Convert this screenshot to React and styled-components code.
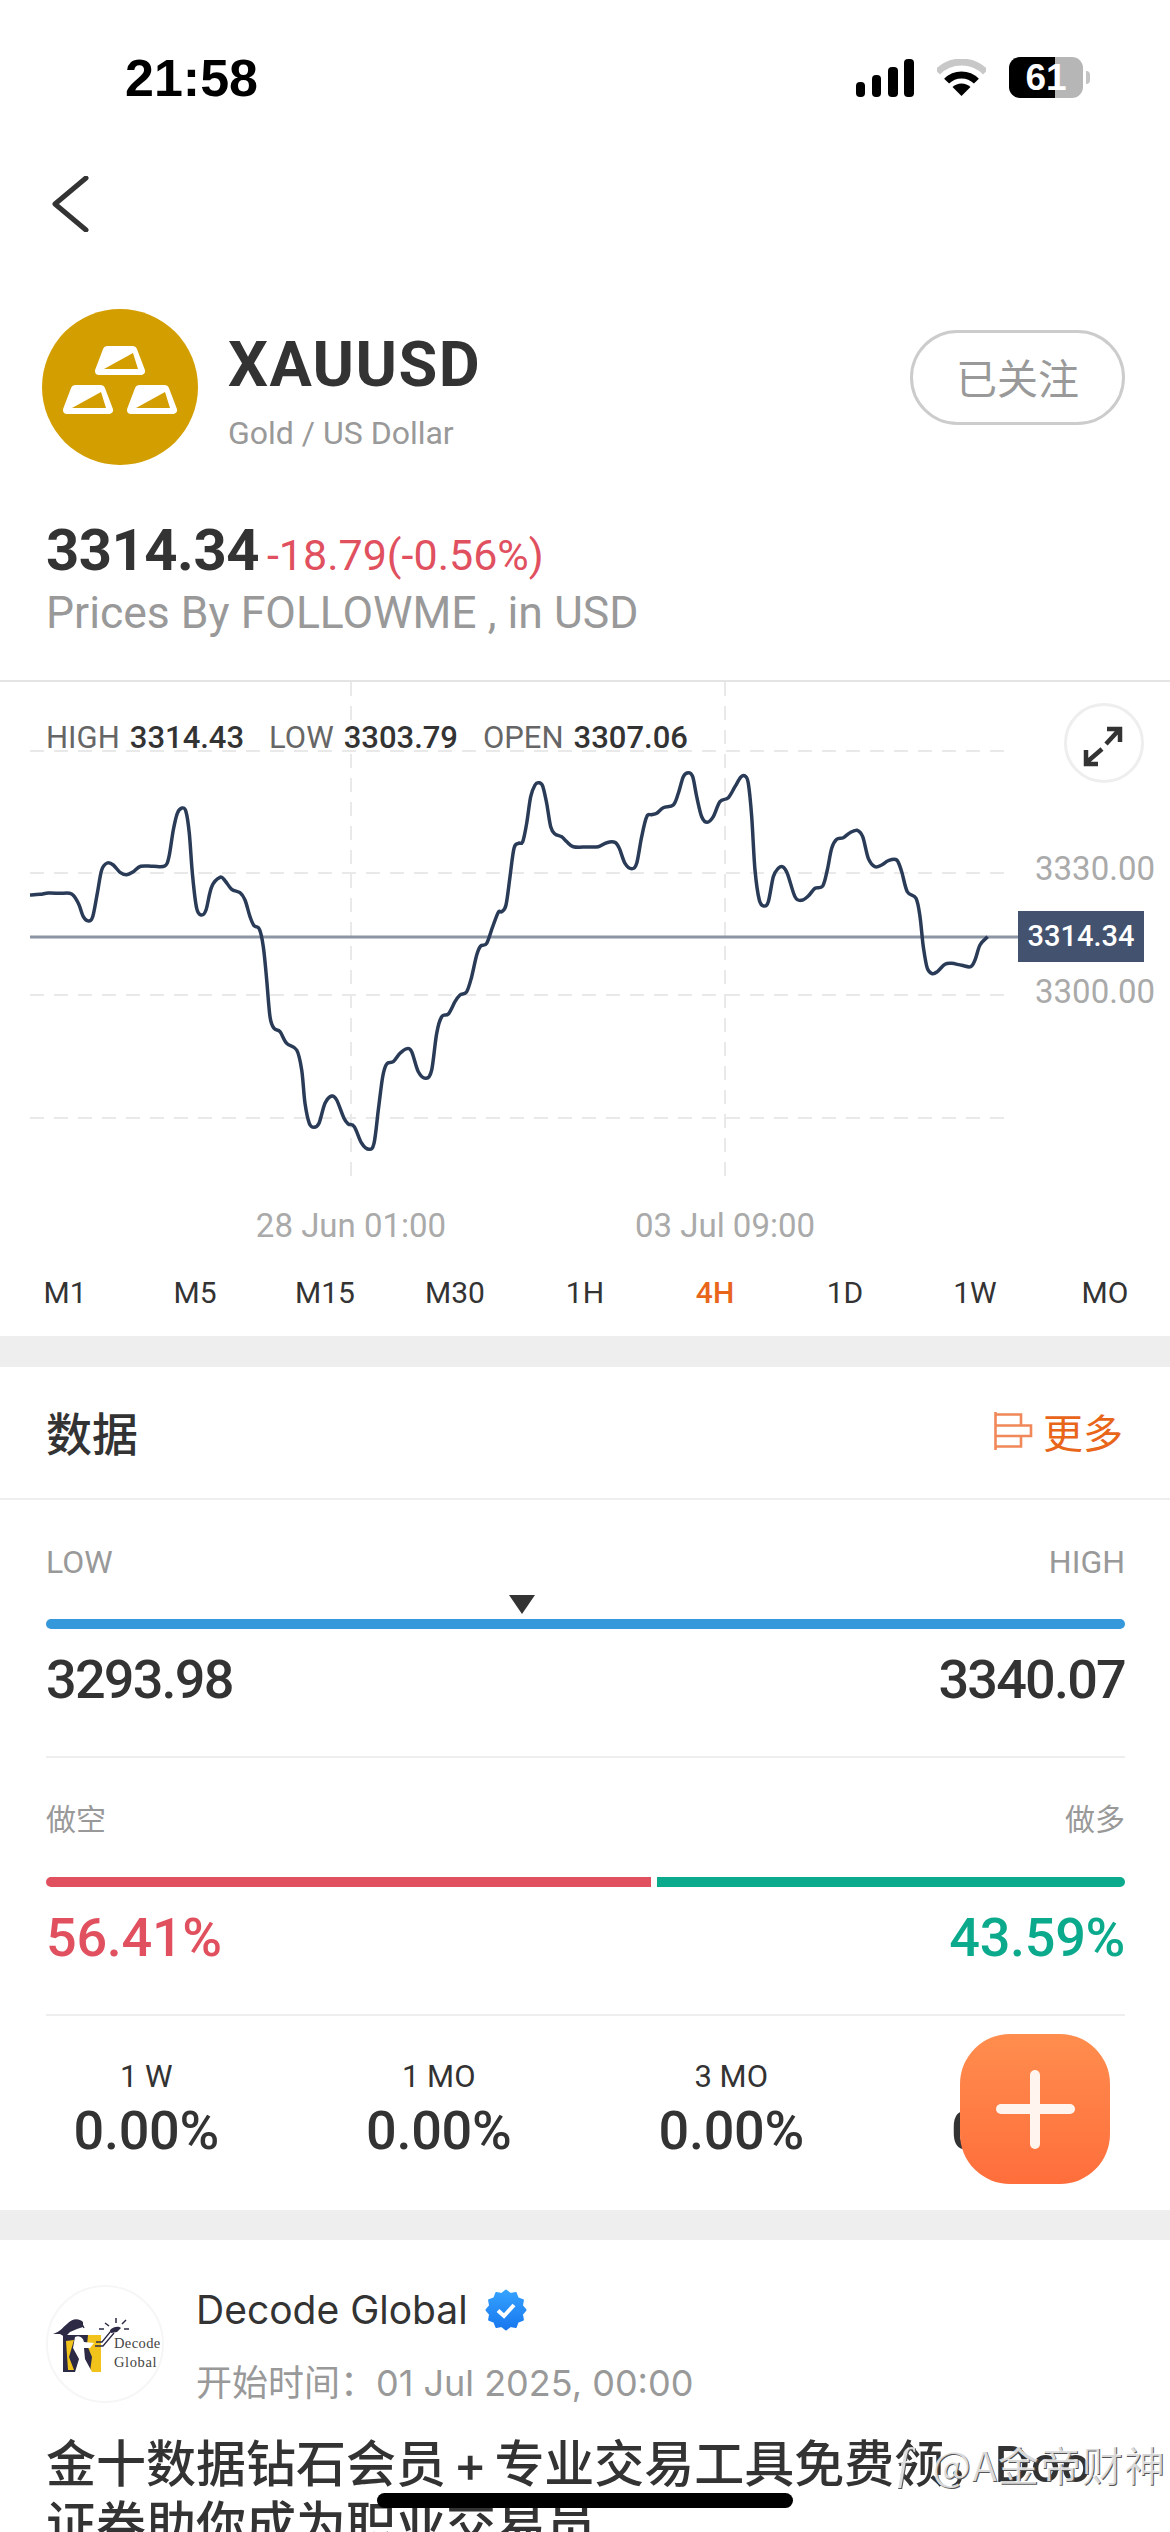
import React from 'react';
import styled, { createGlobalStyle } from 'styled-components';

const CJK = '"Noto Sans CJK SC"';
const FONT = `Roboto, ${CJK}, sans-serif`;

const GlobalStyle = createGlobalStyle`
	html, body {
		margin: 0;
		padding: 0;
		background: #fff;
	}
	body {
		font-family: ${FONT};
		color: #333;
		overflow: hidden;
	}
`;

const Page = styled.div`
	position: relative;
	width: 1170px;
	height: 2532px;
	overflow: hidden;
	background: #fff;
`;

/* status bar */
const StatusBar = styled.div`
	height: 155px;
	padding: 0 87px 0 125px;
	box-sizing: border-box;
	display: flex;
	align-items: center;
	justify-content: space-between;
`;
const Clock = styled.div`
	font-family: 'Liberation Sans', sans-serif;
	font-weight: 700;
	font-size: 52px;
	color: #000;
`;
const StatusIcons = styled.div`
	display: flex;
	align-items: center;
	gap: 23px;
`;
const Battery = styled.div`
	position: relative;
	width: 74px;
	height: 41px;
	border-radius: 11px;
	background: linear-gradient(90deg, #000 0 ${(p) => p.$level}%, #b6b6b6 ${(p) => p.$level}% 100%);
	display: flex;
	align-items: center;
	justify-content: center;
	color: #fff;
	font-family: 'Liberation Sans', sans-serif;
	font-weight: 700;
	font-size: 37px;
	&::after {
		content: '';
		position: absolute;
		right: -7px;
		top: 14px;
		width: 4px;
		height: 13px;
		border-radius: 0 4px 4px 0;
		background: #c4c4c4;
	}
`;

/* nav + symbol */
const NavBar = styled.div`
	height: 98px;
	padding-left: 52px;
	display: flex;
	align-items: center;
`;
const SymbolRow = styled.div`
	margin-top: 56px;
	padding: 0 45px 0 42px;
	display: flex;
	align-items: flex-start;
`;
const SymbolText = styled.div`
	margin-left: 30px;
	flex: 1;
`;
const SymbolName = styled.div`
	margin-top: 24px;
	font-size: 63px;
	line-height: 64px;
	font-weight: 700;
	letter-spacing: 1.4px;
	color: #333;
`;
const SymbolSub = styled.div`
	margin-top: 16px;
	font-size: 32px;
	line-height: 40px;
	color: #999;
`;
const FollowButton = styled.div`
	margin-top: 21px;
	width: 215px;
	height: 95px;
	box-sizing: border-box;
	border: 3px solid #ccc;
	border-radius: 48px;
	padding-bottom: 4px;
	display: flex;
	align-items: center;
	justify-content: center;
	font-family: ${CJK}, sans-serif;
	font-size: 41px;
	color: #999;
`;
const Quote = styled.div`
	padding: 51px 46px 0;
	height: 217px;
	box-sizing: border-box;
	border-bottom: 2px solid #e4e4e4;
`;
const QuoteLine = styled.div`
	display: flex;
	align-items: baseline;
	gap: 8px;
`;
const QuotePrice = styled.span`
	font-size: 58px;
	line-height: 68px;
	font-weight: 700;
	letter-spacing: -0.5px;
	color: #333;
`;
const QuoteChange = styled.span`
	font-size: 43px;
	color: #e0505f;
`;
const QuoteSource = styled.div`
	margin-top: 3px;
	font-size: 44.5px;
	line-height: 52px;
	color: #999;
`;

/* chart */
const ChartArea = styled.div`
	position: relative;
	height: 518px;
`;
const ChartSvg = styled.svg`
	display: block;
	width: 1170px;
	height: 518px;
`;
const ChartStats = styled.div`
	position: absolute;
	left: 46px;
	top: 36px;
	display: flex;
	gap: 25px;
	font-size: 31px;
	line-height: 40px;
`;
const StatItem = styled.span`
	display: flex;
	gap: 10px;
	color: #666;
	b {
		font-weight: 500;
		color: #333;
	}
`;
const ExpandButton = styled.div`
	position: absolute;
	left: 1064px;
	top: 21px;
	width: 80px;
	height: 80px;
	box-sizing: border-box;
	border: 3px solid #eee;
	border-radius: 50%;
	background: #fff;
	svg {
		display: block;
		margin: -3px;
	}
`;
const AxisLabel = styled.span`
	position: absolute;
	left: 1035px;
	top: ${(p) => p.$top}px;
	font-size: 33px;
	line-height: 40px;
	color: #aaa;
`;
const PriceTag = styled.span`
	position: absolute;
	left: 1018px;
	top: 229px;
	width: 126px;
	height: 51px;
	background: #43526f;
	color: #fff;
	font-size: 29px;
	font-weight: 500;
	line-height: 51px;
	text-align: center;
`;
const DateAxis = styled.div`
	position: relative;
	height: 52px;
`;
const DateLabel = styled.span`
	position: absolute;
	left: ${(p) => p.$x}px;
	top: 6px;
	transform: translateX(-50%);
	font-size: 33px;
	line-height: 40px;
	color: #aaa;
	white-space: nowrap;
`;
const Tabs = styled.div`
	height: 84px;
	padding-bottom: 4px;
	box-sizing: border-box;
	display: grid;
	grid-template-columns: repeat(9, 1fr);
	align-items: center;
	text-align: center;
`;
const Tab = styled.span`
	font-size: 30px;
	color: ${(p) => (p.$active ? '#e8651a' : '#333')};
	font-weight: ${(p) => (p.$active ? 500 : 400)};
`;
const Band = styled.div`
	height: ${(p) => p.$h}px;
	background: #eee;
`;

/* data section */
const SectionHead = styled.div`
	height: 133px;
	box-sizing: border-box;
	padding: 0 47px 3px 46px;
	border-bottom: 2px solid #eee;
	display: flex;
	align-items: center;
	justify-content: space-between;
`;
const SectionTitle = styled.div`
	font-family: ${CJK}, sans-serif;
	font-size: 46px;
	font-weight: 500;
	color: #333;
`;
const MoreLink = styled.div`
	display: flex;
	align-items: center;
	gap: 10px;
	font-family: ${CJK}, sans-serif;
	font-size: 40px;
	color: #e8651a;
`;
const Meter = styled.div`
	margin: 0 45px 0 46px;
	padding: 42px 0 46px;
	border-bottom: 2px solid #eee;
`;
const SplitRow = styled.div`
	display: flex;
	justify-content: space-between;
`;
const MeterLabel = styled.span`
	font-family: ${FONT};
	font-size: ${(p) => (p.$cjk ? 30 : 32)}px;
	line-height: 40px;
	color: #999;
`;
const MeterTrack = styled.div`
	position: relative;
	margin-top: 37px;
	height: 10px;
	display: flex;
	gap: 6px;
`;
const MeterFill = styled.div`
	flex: ${(p) => p.$grow};
	background: ${(p) => p.$color};
	border-radius: ${(p) => p.$radius};
`;
const Marker = styled.div`
	position: absolute;
	left: ${(p) => p.$x}px;
	bottom: 15px;
	width: 0;
	height: 0;
	border-left: 13px solid transparent;
	border-right: 13px solid transparent;
	border-top: 19px solid #333;
`;
const MeterValue = styled.span`
	margin-top: 21px;
	font-size: 54px;
	font-weight: 500;
	line-height: 60px;
	letter-spacing: ${(p) => (p.$color ? '-0.3px' : '-1.8px')};
	color: ${(p) => p.$color || '#333'};
`;
const Returns = styled.div`
	height: 194px;
	display: grid;
	grid-template-columns: repeat(4, 1fr);
	padding-top: 43px;
	box-sizing: border-box;
	text-align: center;
`;
const ReturnLabel = styled.div`
	font-size: 31px;
	line-height: 36px;
	color: #333;
`;
const ReturnValue = styled.div`
	margin-top: 6px;
	font-size: 54px;
	font-weight: 500;
	letter-spacing: -0.3px;
	line-height: 60px;
	color: #333;
`;

/* post */
const Post = styled.div`
	padding: 45px 46px 0;
`;
const Author = styled.div`
	display: flex;
	gap: 32px;
`;
const Avatar = styled.div`
	width: 118px;
	height: 118px;
	box-sizing: border-box;
	border: 2px solid #f6f6f6;
	border-radius: 50%;
	overflow: hidden;
	svg {
		display: block;
		margin: -2px;
	}
`;
const AuthorName = styled.div`
	display: flex;
	align-items: center;
	gap: 17px;
	font-family: Inter, sans-serif;
	font-size: 39px;
	line-height: 50px;
	color: #333;
`;
const PostMeta = styled.div`
	margin-top: 23px;
	font-family: Inter, ${CJK}, sans-serif;
	font-size: 36px;
	line-height: 50px;
	color: #999;
`;
const Headline = styled.div`
	margin-top: 26px;
	font-family: Inter, ${CJK}, sans-serif;
	font-size: 50px;
	line-height: 61px;
	font-weight: 500;
	color: #333;
`;
const HeadlinePlus = styled.span`
	margin: 0 7.5px;
`;

/* overlays */
const Fab = styled.div`
	position: absolute;
	left: 960px;
	top: 2034px;
	width: 150px;
	height: 150px;
	border-radius: 50px;
	background: linear-gradient(180deg, #ff8d4e, #ff6e3c);
	&::before,
	&::after {
		content: '';
		position: absolute;
		background: #fff5ee;
		border-radius: 5px;
	}
	&::before {
		left: 36px;
		top: 70px;
		width: 79px;
		height: 10px;
	}
	&::after {
		left: 70px;
		top: 36px;
		width: 10px;
		height: 79px;
	}
`;
const Watermark = styled.div`
	position: absolute;
	left: 892px;
	top: 2436px;
	display: flex;
	align-items: center;
	font-family: 'Noto Sans CJK SC', sans-serif;
	font-size: 41px;
	line-height: 54px;
	letter-spacing: 1px;
	color: rgba(255, 255, 255, 0.8);
	text-shadow: 1px 1px 0 #555;
	white-space: nowrap;
`;
const WatermarkMark = styled.span`
	width: 40px;
	font-family: 'Liberation Serif', serif;
	font-style: italic;
	font-size: 50px;
`;
const HomeIndicator = styled.div`
	position: absolute;
	left: 377px;
	top: 2493px;
	width: 416px;
	height: 15px;
	border-radius: 8px;
	background: #000;
`;

/* curve traced from the picture, in zoom crop coordinates */
const LEFT = [[30,405],[60,403],[85,399],[120,400],[155,402],[175,430],[190,470],[205,483],[218,470],[232,400],[245,330],[262,309],[280,315],[300,337],[320,344],[340,335],[362,319],[400,319],[434,318],[447,290],[460,210],[472,160],[486,144],[498,155],[508,220],[518,350],[530,445],[544,465],[558,450],[575,380],[600,352],[615,362],[635,388],[660,398],[675,420],[690,470],[702,497],[718,507],[730,560],[740,660],[750,770],[762,805],[780,815],[800,850],[830,870],[845,930],[855,1030],[868,1090],[882,1102],[897,1090],[915,1030],[935,1008],[950,1020],[972,1075],[985,1092],[1003,1100],[1025,1150],[1047,1168],[1062,1150],[1075,1050],[1088,950],[1100,912],[1120,905],[1140,880],[1160,866],[1175,875],[1195,935],[1218,955],[1235,930],[1250,820],[1265,770],[1285,762],[1305,725],[1320,705],[1340,695],[1355,650],[1370,585],[1382,558],[1400,550],[1418,500],[1435,457]];
const RIGHT = [[5,455],[18,435],[30,350],[42,265],[55,250],[68,245],[80,190],[92,110],[105,75],[116,68],[128,78],[140,130],[152,200],[165,222],[185,230],[200,245],[220,260],[260,261],[295,260],[320,248],[345,247],[358,265],[375,310],[395,326],[410,310],[425,230],[440,170],[455,164],[470,160],[490,143],[520,135],[535,100],[550,50],[565,38],[578,50],[590,110],[605,170],[622,187],[640,170],[660,125],[685,113],[705,80],[722,52],[735,48],[745,70],[755,170],[765,330],[778,420],[792,438],[805,425],[820,350],[835,325],[848,320],[862,340],[885,410],[905,421],[925,408],[945,385],[968,378],[982,330],[995,265],[1010,238],[1030,233],[1050,218],[1072,211],[1088,230],[1105,295],[1125,320],[1145,315],[1165,302],[1190,300],[1205,335],[1222,395],[1248,415],[1260,470],[1270,560],[1282,625],[1297,641],[1312,635],[1335,613],[1355,610],[1385,616],[1412,620],[1425,600],[1440,555],[1463,530]];

const CURVE = [
	...LEFT.map(([x, y]) => [20 + x / 3, 760 + y / 3]),
	...RIGHT.map(([x, y]) => [500 + x / 3, 760 + y / 3]),
];

function smoothPath(pts) {
	let d = `M${pts[0][0].toFixed(1)} ${pts[0][1].toFixed(1)}`;
	for (let i = 0; i < pts.length - 1; i++) {
		const p0 = pts[i - 1] || pts[i];
		const p1 = pts[i];
		const p2 = pts[i + 1];
		const p3 = pts[i + 2] || p2;
		const c1 = [p1[0] + (p2[0] - p0[0]) / 6, p1[1] + (p2[1] - p0[1]) / 6];
		const c2 = [p2[0] - (p3[0] - p1[0]) / 6, p2[1] - (p3[1] - p1[1]) / 6];
		d += `C${c1[0].toFixed(1)} ${c1[1].toFixed(1)} ${c2[0].toFixed(1)} ${c2[1].toFixed(1)} ${p2[0].toFixed(1)} ${p2[1].toFixed(1)}`;
	}
	return d;
}

const GRID_Y = [751, 873, 995, 1118];
const GRID_X = [351, 725];
const TABS = ['M1', 'M5', 'M15', 'M30', '1H', '4H', '1D', '1W', 'MO'];
const RETURNS = [
	['1 W', '0.00%'],
	['1 MO', '0.00%'],
	['3 MO', '0.00%'],
	['6 MO', '0.00%'],
];

function badgePath() {
	const pts = [];
	for (let i = 0; i < 24; i++) {
		const r = i % 2 ? 16.5 : 19.5;
		const a = (i / 24) * Math.PI * 2;
		pts.push(`${(21 + r * Math.cos(a)).toFixed(1)} ${(21 + r * Math.sin(a)).toFixed(1)}`);
	}
	return `M${pts.join('L')}Z`;
}

function Bar({ x, y }) {
	return (
		<g transform={`translate(${x} ${y})`}>
			<path d="M12 5H38L46 26H4Z" fill="#fff" stroke="#fff" strokeWidth="8" strokeLinejoin="round" />
			<path d="M9 24L38 8L43 24Z" fill="#d39e00" />
		</g>
	);
}

function GoldLogo() {
	return (
		<svg width="156" height="156" viewBox="0 0 156 156">
			<circle cx="78" cy="78" r="78" fill="#d39e00" />
			<Bar x={53} y={36} />
			<Bar x={21} y={75} />
			<Bar x={85} y={75} />
		</svg>
	);
}

function DecodeLogo() {
	return (
		<svg width="118" height="118" viewBox="0 0 118 118">
			<rect x="17" y="50" width="38" height="37" fill="#2d2a45" />
			<path d="M42 50H55V87H44L46 72L41 60Z" fill="#f2c41b" />
			<path d="M20 56L28 55L23 72L28 85H22Z" fill="#f2c41b" />
			<path d="M29 52C33 50 37 52 38 57L48 58L44 63L38 63L39 74L46 87H29L33 74L27 63Z" fill="#fff" />
			<path d="M7 49C14 47 17 42 21 39C26 33 33 33 37 37L37 42L31 44L24 47L19 52L14 49Z" fill="#2d2a45" />
			<path d="M36 39L38 43M50 57L56 57L65 46M49 61L57 61L68 48" stroke="#2d2a45" strokeWidth="1.3" fill="none" />
			<path d="M64 45C68 41 73 41 75 43L71 47L65 48Z" fill="#2d2a45" />
			<path d="M70 38V33M63 41L59 38M76 39L80 35M78 44H83M58 44H53" stroke="#2d2a45" strokeWidth="1.5" />
			<text x="68" y="63" fontFamily="Liberation Serif, serif" fontSize="14.5" letterSpacing="0.4" fill="#444">Decode</text>
			<text x="68" y="82" fontFamily="Liberation Serif, serif" fontSize="14.5" letterSpacing="0.6" fill="#444">Global</text>
		</svg>
	);
}

function App() {
	return (
		<Page>
			<GlobalStyle />
			<StatusBar>
				<Clock>21:58</Clock>
				<StatusIcons>
					<svg width="58" height="38" viewBox="0 0 58 38">
						<rect x="0" y="23" width="9" height="15" rx="4" />
						<rect x="16" y="16" width="9" height="22" rx="4" />
						<rect x="32" y="8" width="10" height="30" rx="4" />
						<rect x="48" y="0" width="10" height="38" rx="4" />
					</svg>
					<svg width="49" height="38" viewBox="0 0 49 38">
						<path d="M0.5 13A34 34 0 0 1 48.5 13" fill="none" stroke="#c8c8c8" strokeWidth="7" />
						<path d="M9.6 22.1A21 21 0 0 1 39.4 22.1" fill="none" stroke="#000" strokeWidth="7" />
						<path d="M24.5 37L15.5 28A13 13 0 0 1 33.5 28Z" fill="#000" />
					</svg>
					<Battery $level={62}>61</Battery>
				</StatusIcons>
			</StatusBar>
			<NavBar>
				<svg width="38" height="56" viewBox="0 0 38 56">
					<path d="M34 2L3 28L34 54" fill="none" stroke="#333" strokeWidth="5" strokeLinecap="round" strokeLinejoin="round" />
				</svg>
			</NavBar>
			<SymbolRow>
				<GoldLogo />
				<SymbolText>
					<SymbolName>XAUUSD</SymbolName>
					<SymbolSub>Gold / US Dollar</SymbolSub>
				</SymbolText>
				<FollowButton>已关注</FollowButton>
			</SymbolRow>
			<Quote>
				<QuoteLine>
					<QuotePrice>3314.34</QuotePrice>
					<QuoteChange>-18.79(-0.56%)</QuoteChange>
				</QuoteLine>
				<QuoteSource>Prices By FOLLOWME , in USD</QuoteSource>
			</Quote>
			<ChartArea>
				<ChartSvg viewBox="0 682 1170 518">
					{GRID_Y.map((y) => (
						<line key={y} x1="30" x2="1012" y1={y} y2={y} stroke="#e9e9e9" strokeWidth="2" strokeDasharray="14 10" />
					))}
					{GRID_X.map((x) => (
						<line key={x} x1={x} x2={x} y1="682" y2="1179" stroke="#e9e9e9" strokeWidth="2" strokeDasharray="14 10" />
					))}
					<line x1="30" x2="1018" y1="937" y2="937" stroke="#8c95a3" strokeWidth="3" />
					<path d={smoothPath(CURVE)} fill="none" stroke="#2a3b58" strokeWidth="3.5" strokeLinejoin="round" />
				</ChartSvg>
				<ChartStats>
					<StatItem>HIGH <b>3314.43</b></StatItem>
					<StatItem>LOW <b>3303.79</b></StatItem>
					<StatItem>OPEN <b>3307.06</b></StatItem>
				</ChartStats>
				<ExpandButton>
					<svg width="80" height="80" viewBox="0 0 80 80" fill="none" stroke="#333" strokeWidth="4.5">
						<path d="M43 26H56V39M54 28L42 41M22 47V61H34M23 59L38 46" />
					</svg>
				</ExpandButton>
				<AxisLabel $top={167}>3330.00</AxisLabel>
				<PriceTag>3314.34</PriceTag>
				<AxisLabel $top={290}>3300.00</AxisLabel>
			</ChartArea>
			<DateAxis>
				<DateLabel $x={351}>28 Jun 01:00</DateLabel>
				<DateLabel $x={725}>03 Jul 09:00</DateLabel>
			</DateAxis>
			<Tabs>
				{TABS.map((t) => (
					<Tab key={t} $active={t === '4H'}>{t}</Tab>
				))}
			</Tabs>
			<Band $h={31} />
			<SectionHead>
				<SectionTitle>数据</SectionTitle>
				<MoreLink>
					<svg width="40" height="40" viewBox="0 0 40 40" fill="none" stroke="#f0885a" strokeWidth="2.6">
						<path d="M2.5 1V39M2.5 3.5H28V14.5M2.5 14.5H38V25H2.5M28 25V35.5H2.5" />
					</svg>
					更多
				</MoreLink>
			</SectionHead>
			<Meter>
				<SplitRow>
					<MeterLabel>LOW</MeterLabel>
					<MeterLabel>HIGH</MeterLabel>
				</SplitRow>
				<MeterTrack>
					<MeterFill $grow={1} $color="#3498db" $radius="5px" />
					<Marker $x={463} />
				</MeterTrack>
				<SplitRow>
					<MeterValue>3293.98</MeterValue>
					<MeterValue>3340.07</MeterValue>
				</SplitRow>
			</Meter>
			<Meter>
				<SplitRow>
					<MeterLabel $cjk>做空</MeterLabel>
					<MeterLabel $cjk>做多</MeterLabel>
				</SplitRow>
				<MeterTrack>
					<MeterFill $grow={56.41} $color="#e0505f" $radius="5px 0 0 5px" />
					<MeterFill $grow={43.59} $color="#0baa8c" $radius="0 5px 5px 0" />
				</MeterTrack>
				<SplitRow>
					<MeterValue $color="#e0505f">56.41%</MeterValue>
					<MeterValue $color="#0baa8c">43.59%</MeterValue>
				</SplitRow>
			</Meter>
			<Returns>
				{RETURNS.map(([label, value]) => (
					<div key={label}>
						<ReturnLabel>{label}</ReturnLabel>
						<ReturnValue>{value}</ReturnValue>
					</div>
				))}
			</Returns>
			<Band $h={30} />
			<Post>
				<Author>
					<Avatar>
						<DecodeLogo />
					</Avatar>
					<div>
						<AuthorName>
							Decode Global
							<svg width="42" height="42" viewBox="0 0 42 42">
								<defs>
									<linearGradient id="badge" x1="0" y1="0" x2="0" y2="1">
										<stop offset="0" stopColor="#35a2ff" />
										<stop offset="1" stopColor="#1877ee" />
									</linearGradient>
								</defs>
								<path d={badgePath()} fill="url(#badge)" stroke="url(#badge)" strokeWidth="2" strokeLinejoin="round" />
								<path d="M13 21.5L19 27L29 16" fill="none" stroke="#fff" strokeWidth="4" />
							</svg>
						</AuthorName>
						<PostMeta>开始时间：01 Jul 2025, 00:00</PostMeta>
					</div>
				</Author>
				<Headline>
					金十数据钻石会员<HeadlinePlus>+</HeadlinePlus>专业交易工具免费领，Doo证券助你成为职业交易员
				</Headline>
			</Post>
			<Fab />
			<Watermark>
				<WatermarkMark>ƒ</WatermarkMark>
				@A金帝财神
			</Watermark>
			<HomeIndicator />
		</Page>
	);
}

export default App;
